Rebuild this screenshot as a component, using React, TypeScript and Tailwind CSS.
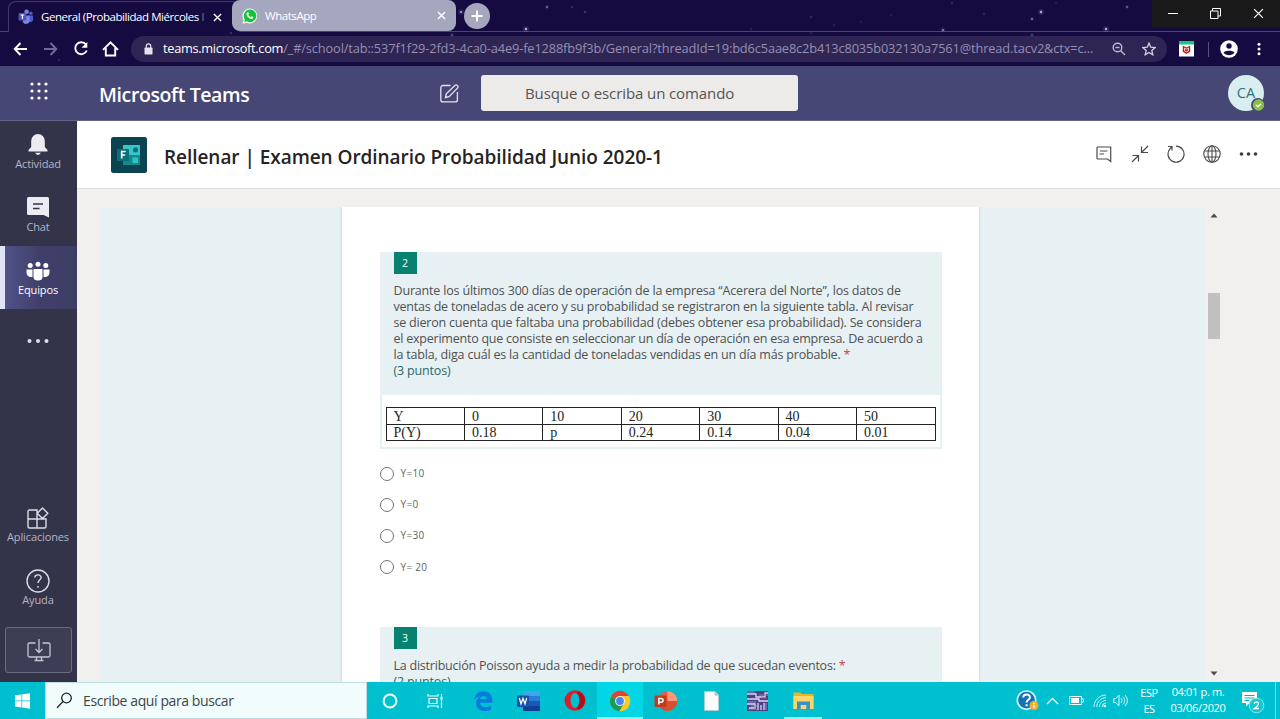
import React from 'react';

const STARS: [number, number, number, number][] = [
  [461, 12, 1.4, 0.8], [547, 7, 1.1, 0.6], [572, 7, 0.8, 0.35], [585, 12, 0.9, 0.45], [526, 29, 1.5, 0.85],
  [452, 35, 1, 0.6], [811, 17, 0.8, 0.35], [834, 25, 0.7, 0.3], [861, 22, 0.7, 0.3], [891, 15, 0.7, 0.3],
  [952, 3, 0.8, 0.35], [984, 14, 0.7, 0.4], [1041, 12, 1.5, 0.85], [1032, 19, 1.1, 0.6], [943, 30, 1.2, 0.7],
  [1106, 29, 1.5, 0.85], [1127, 7, 1.1, 0.55], [1032, 35, 1, 0.5], [231, 33, 0.8, 0.4], [59, 60, 0.8, 0.3],
  [751, 29, 0.7, 0.3], [811, 33, 0.7, 0.3], [1056, 3, 0.7, 0.3],
];

function Starfield() {
  return (
    <svg className="pointer-events-none absolute inset-0" width="1280" height="66" viewBox="0 0 1280 66">
      {STARS.map(([x, y, r, o]) => (
        <g key={`${x}-${y}`} fill="#b9c8ff">
          <circle cx={x} cy={y} r={r * 2} opacity={o * 0.15} />
          <circle cx={x} cy={y} r={r * 0.8} opacity={o} />
        </g>
      ))}
    </svg>
  );
}

function TeamsLogo() {
  return (
    <svg width="16" height="16" viewBox="0 0 16 16">
      <circle cx="12.9" cy="4.3" r="1.7" fill="#5059c9" />
      <path d="M10.5 6.4h4.6v4.1a2.6 2.6 0 0 1-4.6 1.7z" fill="#5059c9" />
      <circle cx="8.6" cy="2.8" r="2.3" fill="#7b83eb" />
      <path d="M4.8 6.4h6.9v5a3.7 3.7 0 0 1-6.9 1.7z" fill="#7b83eb" />
      <rect x="0.6" y="4" width="7.6" height="7.6" rx="0.8" fill="#4b53bc" />
      <path d="M2.5 6h3.8M4.4 6v4" stroke="#fff" strokeWidth="1.1" />
    </svg>
  );
}

function WhatsAppLogo() {
  return (
    <svg width="16" height="16" viewBox="0 0 16 16">
      <path d="M8 .4a7.5 7.5 0 0 0-6.4 11.4L.5 15.7l4-1A7.5 7.5 0 1 0 8 .4z" fill="#f4fff6" />
      <path d="M8 1.6a6.3 6.3 0 0 0-5.2 9.8L2.2 14l2.6-.7A6.3 6.3 0 1 0 8 1.6z" fill="#19c23c" />
      <path d="M5.4 4.4c.5-.4.9-.3 1.1.2l.5 1.2-.7 1c.5 1.1 1.4 1.9 2.5 2.4l.9-.9 1.6.8c.3 1.2-.8 2-1.9 1.9C6.8 10.600 4.2 8 4.6 5.6c.1-.5.4-.9.8-1.2z" fill="#fff" />
    </svg>
  );
}

function Cross({ size, width }: { size: number; width: number }) {
  return (
    <svg width={size} height={size} viewBox="0 0 10 10" fill="none" stroke="#fff" strokeWidth={width}>
      <path d="M1 1l8 8M9 1L1 9" />
    </svg>
  );
}

function TabStrip() {
  return (
    <div className="flex h-[31px] text-[11.5px] text-white">
      <div className="relative ml-[8px] mt-px flex h-[31px] w-[232px] items-center rounded-t-lg border-x border-t border-[#3e3770] bg-[#160b41] pl-[9px]">
        <TeamsLogo />
        <span className="ml-[7px] w-[164px] overflow-hidden whitespace-nowrap tracking-[-0.44px]">
          General (Probabilidad Miércoles <span className="opacity-40">l</span>
        </span>
        <span className="ml-[8px]"><Cross size={9} width={1.5} /></span>
      </div>
      <div className="relative -ml-[8px] flex w-[224px] items-center rounded-lg bg-[#a5a7bf] pl-[10px]">
        <WhatsAppLogo />
        <span className="ml-[7px] tracking-[-0.45px]">WhatsApp</span>
        <span className="ml-auto mr-[10px]"><Cross size={9} width={1.5} /></span>
      </div>
      <div className="ml-[8px] mt-[3px] flex size-[26px] items-center justify-center rounded-full bg-[#a5a7bf]">
        <svg width="12" height="12" viewBox="0 0 12 12" stroke="#fff" strokeWidth="2"><path d="M6 0.5v11M0.5 6h11" /></svg>
      </div>
      <div className="relative z-10 ml-auto flex h-[27px] w-[128px] bg-[#191919]">
        <div className="flex w-[41px] items-center justify-center"><span className="h-px w-[10px] bg-white" /></div>
        <div className="flex w-[44px] items-center justify-center">
          <svg width="11" height="11" viewBox="0 0 11 11" fill="none" stroke="#fff"><path d="M0.5 3h7.5v7.5h-7.5zM2.5 3V.5h8V8H8" /></svg>
        </div>
        <div className="flex w-[43px] items-center justify-center"><Cross size={11} width={1.1} /></div>
      </div>
    </div>
  );
}

function AddressBar() {
  return (
    <div className="flex h-[35px] items-center border-t border-[#4a4378] text-white">
      <svg className="ml-[12px]" width="100" height="18" viewBox="0 0 100 18" fill="none" strokeWidth="1.9">
        <path d="M15 9H3M8.500 3L2.700 9l5.800 6" stroke="#fff" />
        <path d="M32 9h12M38.500 3l5.800 6-5.800 6" stroke="#716b95" />
        <path d="M74 4.500A6 6 0 1 0 74.800 10.500" stroke="#fff" />
        <path d="M75.300 2v5.800h-5.800z" fill="#fff" />
      </svg>
      <svg className="-ml-[10px]" width="17" height="18" viewBox="0 0 17 18" fill="none" stroke="#fff" strokeWidth="1.9">
        <path d="M1 9.800L8.500 2.300 16 9.800M3.800 8v7.500h9.400V8" />
      </svg>
      <div className="ml-[12px] flex h-[26px] w-[1036px] items-center rounded-full bg-[#2e2555] pl-[13px] text-[12.8px]">
        <svg width="9" height="12" viewBox="0 0 9 12"><rect x="0.500" y="4.500" width="8" height="7" rx="0.800" fill="#e4e2ee" /><path d="M2.300 5V3a2.200 2.200 0 0 1 4.400 0v2" fill="none" stroke="#e4e2ee" strokeWidth="1.200" /></svg>
        <span className="ml-[10px] whitespace-nowrap tracking-[-0.31px]">teams.microsoft.com</span>
        <span className="whitespace-nowrap tracking-[-0.135px] text-[#958fb2]">/_#/school/tab::537f1f29-2fd3-4ca0-a4e9-fe1288fb9f3b/General?threadId=19:bd6c5aae8c2b413c8035b032130a7561@thread.tacv2&amp;ctx=c...</span>
        <svg className="ml-auto" width="14" height="14" viewBox="0 0 14 14" fill="none" stroke="#bdb9cf" strokeWidth="1.4"><circle cx="5.500" cy="5.500" r="4.300" /><path d="M8.700 8.700L13 13M3.500 5.500h4" /></svg>
        <svg className="ml-[16px] mr-[11px]" width="14" height="14" viewBox="0 0 13 13" fill="none" stroke="#d4d1e2" strokeWidth="1.2"><path d="M6.500 1l1.600 3.800 4.100.4-3.100 2.700.9 4-3.500-2.100L3 11.900l.9-4L.8 5.200l4.100-.4z" /></svg>
      </div>
      <svg className="ml-[11px]" width="17" height="16" viewBox="0 0 17 16">
        <rect x="1" y="0.500" width="15" height="15" fill="#fff" /><rect x="1" y="0.500" width="15" height="3" fill="#16c887" />
        <path d="M4.800 4.800l3.700 1.800 3.700-1.800v6L8.500 12.900 4.800 10.800z" fill="#c01818" /><path d="M6.500 7.200v2.600l2 1.100 2-1.100V7.200l-2 1z" fill="none" stroke="#fff" strokeWidth="0.8" />
      </svg>
      <span className="ml-[13px] h-[15px] w-px bg-[#57518a]" />
      <svg className="ml-[11px]" width="18" height="18" viewBox="0 0 18 18"><circle cx="9" cy="9" r="8.800" fill="#fff" /><circle cx="9" cy="6" r="2.700" fill="#170b42" /><path d="M3.600 12.800c1.200-2.600 9.600-2.600 10.800 0-2 3.100-8.800 3.100-10.800 0z" fill="#170b42" /></svg>
      <svg className="ml-[19px]" width="4" height="14" viewBox="0 0 4 14" fill="#fff"><circle cx="2" cy="2.200" r="1.500" /><circle cx="2" cy="7" r="1.500" /><circle cx="2" cy="11.800" r="1.500" /></svg>
    </div>
  );
}

function TeamsHeader() {
  return (
    <header className="flex h-[55px] shrink-0 items-center border-b border-[#62628f] bg-[#464775] text-white">
      <svg className="mb-[4px] ml-[30px]" width="18" height="18" viewBox="0 0 18 18" fill="#fff">
        {[2, 9, 16].map((y) => [2, 9, 16].map((x) => <circle key={`${x}-${y}`} cx={x} cy={y} r="1.6" />))}
      </svg>
      <h1 className="ml-[51px] mt-[3px] w-[341px] text-[19.5px] font-semibold tracking-[-0.4px]">Microsoft Teams</h1>
      <svg width="19" height="19" viewBox="0 0 19 19" fill="none" stroke="#e4e4f0" strokeWidth="1.3">
        <path d="M10.500 1.500H3A2.200 2.200 0 0 0 .8 3.700v12A2.200 2.200 0 0 0 3 17.900h12.200a2.200 2.200 0 0 0 2.200-2.200V8M5.500 13.500l.8-3.700 8.800-8.600c1.500-1 3.700 1 2.600 2.700l-8.600 8.700z" />
      </svg>
      <div className="ml-[22px] flex h-[36px] w-[317px] items-center rounded-[3px] bg-[#edebe9] pl-[44px] text-[15px] tracking-[-0.1px] text-[#555453]">Busque o escriba un comando</div>
      <div className="relative ml-auto mr-[16px] flex size-[36px] items-center justify-center rounded-full bg-[#d9eef1] text-[14.5px] font-medium text-[#327275]">
        CA
        <svg className="absolute -bottom-[1px] -right-[1px]" width="14" height="14" viewBox="0 0 14 14"><circle cx="7" cy="7" r="7" fill="#464775" /><circle cx="7.500" cy="7" r="5.700" fill="#8cbd4c" /><path d="M5 7l1.800 1.800L10 5.700" fill="none" stroke="#fff" strokeWidth="1.2" /></svg>
      </div>
    </header>
  );
}

function RailItem({ label, active, children }: { label: string; active?: boolean; children: React.ReactNode }) {
  return (
    <div className={active
      ? '-mt-px flex h-[63px] flex-col items-center border-l-[5px] border-[#e2e2f6] bg-linear-to-r from-[#51518a] via-[#403f69] to-[#3d3e66] pr-[6px] pt-[13px] text-white'
      : 'flex h-[63px] flex-col items-center pr-px pt-[12px] text-[#b5b4c6]'}>
      <div className="flex h-[23px] items-center">{children}</div>
      <span className="whitespace-nowrap text-[11px] leading-[16px] tracking-[-0.12px]">{label}</span>
    </div>
  );
}

function Rail() {
  return (
    <nav className="flex w-[77px] shrink-0 flex-col bg-[#33344a]">
      <RailItem label="Actividad">
        <svg width="20" height="22" viewBox="0 0 20 22" fill="#ebebf1"><path d="M10 0a6.800 6.800 0 0 0-6.800 6.800V13L.5 16v1.500h19V16l-2.700-3V6.800A6.800 6.800 0 0 0 10 0zM7.200 18.800a2.900 2.900 0 0 0 5.600 0z" /></svg>
      </RailItem>
      <RailItem label="Chat">
        <svg width="22" height="21" viewBox="0 0 22 21"><path d="M1.500 0h19A1.500 1.500 0 0 1 22 1.500V20.500L16.500 18h-15A1.500 1.500 0 0 1 0 16.500v-15A1.500 1.500 0 0 1 1.500 0z" fill="#ebebf1" /><path d="M6 7h10M6 11.500h6.500" stroke="#33344a" strokeWidth="1.4" /></svg>
      </RailItem>
      <RailItem label="Equipos" active>
        <svg width="24" height="20" viewBox="0 0 24 20" fill="#fff"><circle cx="4.200" cy="4.500" r="2.500" /><circle cx="12" cy="3.200" r="2.500" /><circle cx="19.800" cy="4.500" r="2.500" /><path d="M.5 8.500h6v7.500C2.500 16.500.5 14.500.5 11.500zM17.500 8.500h6v3c0 3-2 5-6 4.500zM7.500 8h9v8a4.500 3.600 0 0 1-9 0z" /></svg>
      </RailItem>
      <svg className="ml-[27px] mt-[29px]" width="22" height="6" viewBox="0 0 22 6" fill="#dedee8"><circle cx="2.500" cy="3" r="2" /><circle cx="11" cy="3" r="2" /><circle cx="19.500" cy="3" r="2" /></svg>
      <div className="mt-auto">
        <RailItem label="Aplicaciones">
          <svg width="22" height="22" viewBox="0 0 22 22" fill="none" stroke="#dcdce8" strokeWidth="1.4"><path d="M10 12V3H2.500A1.500 1.500 0 0 0 1 4.500v15A1.500 1.500 0 0 0 2.500 21h15a1.500 1.500 0 0 0 1.500-1.500V12H1M10 12v9M15.500 1l5.300 5.300-5.300 5.300-5.300-5.300z" /></svg>
        </RailItem>
        <RailItem label="Ayuda">
          <svg width="24" height="24" viewBox="0 0 24 24" fill="none" stroke="#dcdce8" strokeWidth="1.4"><circle cx="12" cy="12" r="11" /><path d="M8.800 8.500c.3-3.600 6.600-3.400 6.300.3-.2 2.300-3.100 2.400-3.100 5.300M12 17v1.800" /></svg>
        </RailItem>
      </div>
      <div className="mb-[9px] ml-[5px] mt-[7px] flex h-[46px] w-[67px] items-center justify-center rounded-[3px] border border-[#6b6b82] bg-[#3d3e55]">
        <svg width="24" height="24" viewBox="0 0 24 24" fill="none" stroke="#c6c6d4" strokeWidth="1.3"><path d="M8.500 5H2.500A1.500 1.500 0 0 0 1 6.500v11A1.500 1.500 0 0 0 2.500 19h19a1.500 1.500 0 0 0 1.500-1.500v-11A1.500 1.500 0 0 0 21.500 5h-6M9.500 19v3M14.500 19v3M7.500 22.500h9M12 1v13M8.500 11l3.500 3.500 3.500-3.500" /></svg>
      </div>
    </nav>
  );
}

function FormsLogo() {
  return (
    <svg width="36" height="36" viewBox="0 0 36 36">
      <rect width="36" height="36" rx="2.500" fill="#0c4350" />
      <path d="M12 8h17v20H12z" fill="#12898c" /><path d="M12 8h17v10H12z" fill="#36c6c9" />
      <circle cx="24.500" cy="12.800" r="2.600" fill="#107178" /><rect x="21.500" y="20.500" width="5.500" height="5.500" fill="#37bfc1" />
      <rect x="6" y="12" width="12" height="12" rx="0.500" fill="#0a6f78" />
      <path d="M10.700 21.500v-7h4M10.700 18h3.500" fill="none" stroke="#fff" strokeWidth="1.7" />
    </svg>
  );
}

function ExamHeader() {
  return (
    <div className="flex h-[68px] shrink-0 items-center border-b border-[#e3e1df] bg-white pl-[34px] pt-px text-[#252423]">
      <FormsLogo />
      <h2 className="ml-[17px] mt-[4px] whitespace-nowrap text-[19px] font-semibold tracking-[-0.05px]">Rellenar | Examen Ordinario Probabilidad Junio 2020-1</h2>
      <div className="mb-[3px] ml-auto mr-[22px] flex items-center gap-[18px]">
        <svg width="18" height="18" viewBox="0 0 18 18" fill="none" stroke="#4b4a49" strokeWidth="1.2"><path d="M2.800 2h12.900v14.500L12.500 14H2.800A.8.8 0 0 1 2 13.200V2.800A.8.800 0 0 1 2.800 2zM5 6h7.500M4.500 9h4.500" /></svg>
        <svg width="18" height="18" viewBox="0 0 18 18" fill="none" stroke="#4b4a49" strokeWidth="1.2"><path d="M17 1l-6.500 6.500M10.500 1.500v6H17M1 17l6.500-6.500M1.500 10.500h6v6" /></svg>
        <svg width="18" height="18" viewBox="0 0 18 18" fill="none" stroke="#4b4a49" strokeWidth="1.2"><path d="M2.800 4.200A8 8 0 1 0 9 1.200M1 1.500h4v4M5 1.500L2.800 4.200" /></svg>
        <svg width="18" height="18" viewBox="0 0 18 18" fill="none" stroke="#4b4a49" strokeWidth="1.1"><circle cx="9" cy="9" r="8.200" /><ellipse cx="9" cy="9" rx="4" ry="8.200" /><path d="M9 1v16M1.800 6h14.400M1.800 12h14.400" /></svg>
        <svg width="19" height="6" viewBox="0 0 19 6" fill="#3b3a39"><circle cx="2.500" cy="3" r="1.800" /><circle cx="9.500" cy="3" r="1.800" /><circle cx="16.500" cy="3" r="1.800" /></svg>
      </div>
    </div>
  );
}

const PROBABILITIES = [
  ['Y', '0', '10', '20', '30', '40', '50'],
  ['P(Y)', '0.18', 'p', '0.24', '0.14', '0.04', '0.01'],
];

function DataTable() {
  return (
    <table className="w-[550px] table-fixed border-collapse border border-[#222] font-['Liberation_Serif',serif] text-[14px] leading-[14px] text-[#222]">
      <tbody>
        {PROBABILITIES.map((row, index) => (
          <tr key={row[0]} className={index === 0 ? 'h-[17px]' : 'h-[16px]'}>
            {row.map((cell) => <td key={cell} className="border border-[#222] pb-0 pl-[7px] pt-px">{cell}</td>)}
          </tr>
        ))}
      </tbody>
    </table>
  );
}

function Prompt({ children }: { children: React.ReactNode }) {
  return <div className="ml-[14px] mt-[9px] whitespace-nowrap text-[12.5px] leading-[16px] text-[#4f5152]">{children}</div>;
}

function QuestionNumber({ value }: { value: number }) {
  return <div className="ml-[14px] flex h-[22px] w-[23px] items-center justify-center bg-[#078271] pt-px text-[10.5px] text-white">{value}</div>;
}

function Question() {
  return (
    <section className="h-[420px] pt-[45px]">
      <div className="h-[197px] border-2 border-t-0 border-[#e7f0f3] bg-white">
        <div className="-mx-[2px] h-[143px] bg-[#e7f0f3]">
          <QuestionNumber value={2} />
          <Prompt>
            <p className="tracking-[-0.18px]">Durante los últimos 300 días de operación de la empresa “Acerera del Norte”, los datos de</p>
            <p className="tracking-[-0.2px]">ventas de toneladas de acero y su probabilidad se registraron en la siguiente tabla. Al revisar</p>
            <p className="tracking-[-0.2px]">se dieron cuenta que faltaba una probabilidad (debes obtener esa probabilidad). Se considera</p>
            <p className="tracking-[-0.23px]">el experimento que consiste en seleccionar un día de operación en esa empresa. De acuerdo a</p>
            <p className="tracking-[-0.19px]">la tabla, diga cuál es la cantidad de toneladas vendidas en un día más probable. <span className="text-[#c4454f]">*</span></p>
            <p className="tracking-[-0.17px] text-[#2a6a6c]">(3 puntos)</p>
          </Prompt>
        </div>
        <div className="ml-[4px] mt-[12px]"><DataTable /></div>
      </div>
      <div className="mt-[9px] flex flex-col text-[10px] text-[#606263]">
        {['Y=10', 'Y=0', 'Y=30', 'Y= 20'].map((answer) => (
          <label key={answer} className="flex h-[31.2px] items-center gap-[7px]">
            <span className="size-[14px] rounded-full border border-[#727475] bg-white" />
            <span className="tracking-[0.3px]">{answer}</span>
          </label>
        ))}
      </div>
    </section>
  );
}

function ExamBody() {
  return (
    <div className="flex min-h-0 flex-1 overflow-hidden bg-[#f2f0ef] pl-[23px] pt-[18px]">
      <div className="w-[1106px] overflow-hidden bg-[#e7f0f3] pl-[242px]">
        <div className="h-[475px] w-[637px] overflow-hidden bg-white px-[37.5px] shadow-[0_0_3px_#c3d0d6]">
          <Question />
          <section className="h-[120px] bg-[#e7f0f3]">
            <QuestionNumber value={3} />
            <Prompt>
              <p className="tracking-[-0.23px]">La distribución Poisson ayuda a medir la probabilidad de que sucedan eventos: <span className="text-[#c4454f]">*</span></p>
              <p className="tracking-[-0.17px] text-[#2a6a6c]">(2 puntos)</p>
            </Prompt>
          </section>
        </div>
      </div>
      <div className="flex w-[16px] flex-col items-center">
        <svg className="mt-[6px]" width="8" height="5" viewBox="0 0 8 5"><path d="M4 .5L7.500 4.500h-7z" fill="#4b4a4a" /></svg>
        <span className="mt-[75px] h-[46px] w-[12px] bg-[#c1c0c0]" />
        <svg className="mb-[6px] mt-auto" width="8" height="5" viewBox="0 0 8 5"><path d="M4 4.500L.5.500h7z" fill="#4b4a4a" /></svg>
      </div>
    </div>
  );
}

function TaskbarApp({ state, children }: { state?: 'active' | 'open'; children: React.ReactNode }) {
  const look = state === 'active' ? 'border-[#8ff4fb] bg-[#00d6e6]' : 'border-transparent';
  return (
    <div className={`relative flex h-[37px] w-[45.7px] items-center justify-center border-b-2 pt-[2px] ${look}`}>
      {children}
      {state === 'open' && <span className="absolute -bottom-[2px] left-[4px] h-[2px] w-[38px] bg-[#8ff4fb]" />}
    </div>
  );
}

function Taskbar() {
  return (
    <footer className="flex h-[37px] shrink-0 bg-[#00c0cf] text-white">
      <div className="flex w-[45px] items-center justify-center">
        <svg width="15" height="16" viewBox="0 0 15 16" fill="#fff"><path d="M0 2.300L6.500 1.400v6.200H0zM7.200 1.300L15 .2v7.400H7.200zM0 8.300h6.500v6.200L0 13.600zM7.200 8.300H15v7.400l-7.800-1.100z" /></svg>
      </div>
      <div className="flex w-[322px] items-center border border-[#bcdcdf] bg-[#f1fcfc] pl-[10px] text-[14px] text-[#3f4546]">
        <svg width="17" height="17" viewBox="0 0 17 17" fill="none" stroke="#222" strokeWidth="1.3"><circle cx="10.500" cy="6" r="4.800" /><path d="M7 9.500L1 15.800" /></svg>
        <span className="ml-[10px] tracking-[-0.4px]">Escribe aquí para buscar</span>
      </div>
      <div className="flex">
        <TaskbarApp><svg width="16" height="16" viewBox="0 0 16 16"><circle cx="8" cy="8" r="6.400" fill="none" stroke="#e8ffff" strokeWidth="2" /></svg></TaskbarApp>
        <TaskbarApp><svg width="17" height="16" viewBox="0 0 17 16" fill="none" stroke="#e8ffff" strokeWidth="1.2"><path d="M1 1v2h10V1M2 5.500h8v5H2zM1 15v-2h10v2M14.500 1v14" /><rect x="13.500" y="4" width="2" height="2.500" fill="#e8ffff" stroke="none" /></svg></TaskbarApp>
      </div>
      <div className="ml-[2px] flex">
        <TaskbarApp><svg width="20" height="20" viewBox="0 0 20 20"><path d="M.8 9C1.800 3.200 5.700.3 10.400.3c5.600 0 9 4 9 9.200v2.200H7.100c.2 5.200 6.800 5.500 10.900 3.100v4C11 22 3 19 3 12.300 3 9.500 4.700 7 7.300 5.600 4.300 6 2.100 7.200.8 9zm6.400-.7h6.600C13.800 4 7.600 3.900 7.200 8.300z" fill="#087bdc" /></svg></TaskbarApp>
        <TaskbarApp><svg width="24" height="20" viewBox="0 0 24 20"><path d="M6 0h17v20H6z" fill="#185abd" /><path d="M6 0h17v5H6z" fill="#41a5ee" /><path d="M6 5h17v5H6z" fill="#2b7cd3" /><path d="M6 15h17v5H6z" fill="#103f91" /><rect x="0" y="4.500" width="12" height="11.500" rx="1" fill="#1650ae" /><path d="M2.300 7l1.700 6 2-5.500 2 5.500 1.700-6" fill="none" stroke="#fff" strokeWidth="1.3" /></svg></TaskbarApp>
        <TaskbarApp><svg width="22" height="21" viewBox="0 0 22 21"><ellipse cx="11" cy="10.500" rx="10.500" ry="10.200" fill="#e01c2b" /><path d="M15 1.400a10 10 0 0 1 0 18.200c-3-1-5-5-5-9.100s2-8 5-9.100z" fill="#b40d1c" /><ellipse cx="11" cy="10.500" rx="4.500" ry="7.600" fill="#00c0cf" /></svg></TaskbarApp>
        <TaskbarApp state="active"><svg width="22" height="22" viewBox="0 0 22 22"><circle cx="11" cy="11" r="10.200" fill="#fbc926" /><path d="M11 11L2.200 5.900A10.200 10.200 0 0 1 19.800 5.900z" fill="#dc4437" /><path d="M2.200 5.900A10.200 10.200 0 0 0 10.500 21.200L15 13.500 11 11z" fill="#189b57" /><path d="M11 6.100h8.900a10.200 10.200 0 0 1-9.400 15.100L15.200 13.500z" fill="#fbc926" /><circle cx="11" cy="11" r="4.900" fill="#f5f7f8" /><circle cx="11" cy="11" r="3.900" fill="#4a86ea" /></svg></TaskbarApp>
        <TaskbarApp><svg width="24" height="20" viewBox="0 0 24 20"><circle cx="13.500" cy="10" r="9.800" fill="#e0603f" /><path d="M13.500.2a9.800 9.800 0 0 1 9.800 9.800h-9.800z" fill="#ff9677" /><path d="M23.300 10a9.800 9.800 0 0 1-18.100 5.200L13.500 10z" fill="#d35230" /><rect x="0.500" y="4.500" width="12" height="11.500" rx="1" fill="#c13b1e" /><path d="M4.800 13.500v-6h2.400a1.800 1.800 0 0 1 0 3.700H4.800" fill="none" stroke="#fff" strokeWidth="1.5" /></svg></TaskbarApp>
        <TaskbarApp><svg width="15" height="20" viewBox="0 0 15 20"><path d="M.5.500H11l3.500 3.500v15.500H.5z" fill="#fafcfc" stroke="#b7cacc" strokeWidth="0.7" /><path d="M11 .5V4h3.500" fill="#ccd8da" stroke="#8ba3a6" strokeWidth="0.7" /></svg></TaskbarApp>
        <TaskbarApp><svg width="21" height="20" viewBox="0 0 21 20"><rect width="21" height="20" fill="#4c4088" /><path d="M0 3h9v3h9V2h3M0 8h12v2h9M0 13h8v5M2 17h5M11 19v-7M14 19v-5M17 19v-7" fill="none" stroke="#dcd7f2" strokeWidth="1.3" /><path d="M0 1h8M12 4h9M1 11h8M4 15h6M19 12v7" stroke="#938cc4" /><path d="M14 7h6M1 18.500h9" stroke="#a1517c" /></svg></TaskbarApp>
        <TaskbarApp state="open"><svg width="21" height="18" viewBox="0 0 21 18"><path d="M.5 2V.5h7L9 2h11.500v15H.5z" fill="#eab22e" /><path d="M.5 4h20v13H.5z" fill="#fcd766" /><path d="M4 17.500V9.500h13v8h-3.700V13H7.700v4.500z" fill="#3b90c9" /></svg></TaskbarApp>
      </div>
      <div className="ml-auto flex items-center">
        <svg width="23" height="21" viewBox="0 0 23 21"><circle cx="10.500" cy="10.200" r="9.200" fill="#1673b8" stroke="#e3f5fb" strokeWidth="1.7" /><path d="M7.200 7.500c.2-4.200 7-3.700 6.700 0-.2 2.200-3.300 2.400-3.300 5M10.600 14.200v2" fill="none" stroke="#fff" strokeWidth="2" /><circle cx="18" cy="15.500" r="4.500" fill="#efb02d" /><path d="M18 13v1.300M18 15.200V18" stroke="#fff" strokeWidth="1.3" /></svg>
        <svg className="ml-[7px]" width="13" height="8" viewBox="0 0 13 8" fill="none" stroke="#e3fdff" strokeWidth="1.3"><path d="M1 7l5.500-5.500L12 7" /></svg>
        <svg className="ml-[10px]" width="15" height="9" viewBox="0 0 15 9"><path d="M.5.500h12v8H.5zM13 3h1.500v3H13" fill="none" stroke="#e8ffff" /><path d="M2 2h8v5H2z" fill="#fff" /></svg>
        <svg className="ml-[9px]" width="14" height="14" viewBox="0 0 14 14" fill="none" stroke="#cff7fa" strokeWidth="1"><path d="M1 13C1 6.400 6.400 1 13 1M3.700 13c0-5.100 4.200-9.300 9.300-9.300M6.400 13A6.600 6.600 0 0 1 13 6.400M9.100 13A3.900 3.900 0 0 1 13 9.100" /><circle cx="11.800" cy="12" r="1.300" fill="#fff" stroke="none" /></svg>
        <svg className="ml-[6px]" width="15" height="13" viewBox="0 0 15 13" fill="none" stroke="#d9fafc" strokeWidth="1"><path d="M.8 4.500h2L6 1.200v10.600L2.800 8.500h-2zM8 4.200c1.200 1.200 1.200 3.400 0 4.600M10 2.600c2.100 2.100 2.100 5.700 0 7.800M12 1c3 3 3 8 0 11" /></svg>
        <div className="ml-[9px] flex w-[24px] flex-col items-center text-[11px] leading-[16px] tracking-[-0.5px]"><span>ESP</span><span>ES</span></div>
        <div className="mb-px ml-[7px] w-[60px] whitespace-nowrap text-center text-[11px] leading-[16px] tracking-[-0.34px]"><div>04:01 p. m.</div><div>03/06/2020</div></div>
        <svg className="ml-[13px] mt-[3px]" width="24" height="24" viewBox="0 0 24 24"><path d="M1 2h15v11H8.500L5 16.500V13H1z" fill="#fff" /><path d="M3.500 5.500h10M3.500 8h10M3.500 10.500h5" stroke="#00b1c0" /><circle cx="15.500" cy="15.500" r="7.300" fill="#18c5d2" stroke="#8be6ed" /><path d="M13.300 13.800c.2-2.700 4.600-2.200 4.200.3-.2 1.400-2.100 2.600-4.200 4.400h4.600" fill="none" stroke="#fff" strokeWidth="1.3" /></svg>
        <span className="ml-[10px] mr-[4px] h-[37px] w-px bg-[#6cdde5]" />
      </div>
    </footer>
  );
}

export default function App() {
  return (
    <div className="flex h-[719px] w-[1280px] flex-col overflow-hidden font-['Open_Sans','Noto_Sans',sans-serif]">
      <div className="relative h-[66px] shrink-0 bg-[#160b41]">
        <TabStrip />
        <AddressBar />
        <Starfield />
      </div>
      <TeamsHeader />
      <div className="flex min-h-0 flex-1">
        <Rail />
        <main className="flex min-w-0 flex-1 flex-col">
          <ExamHeader />
          <ExamBody />
        </main>
      </div>
      <Taskbar />
    </div>
  );
}
